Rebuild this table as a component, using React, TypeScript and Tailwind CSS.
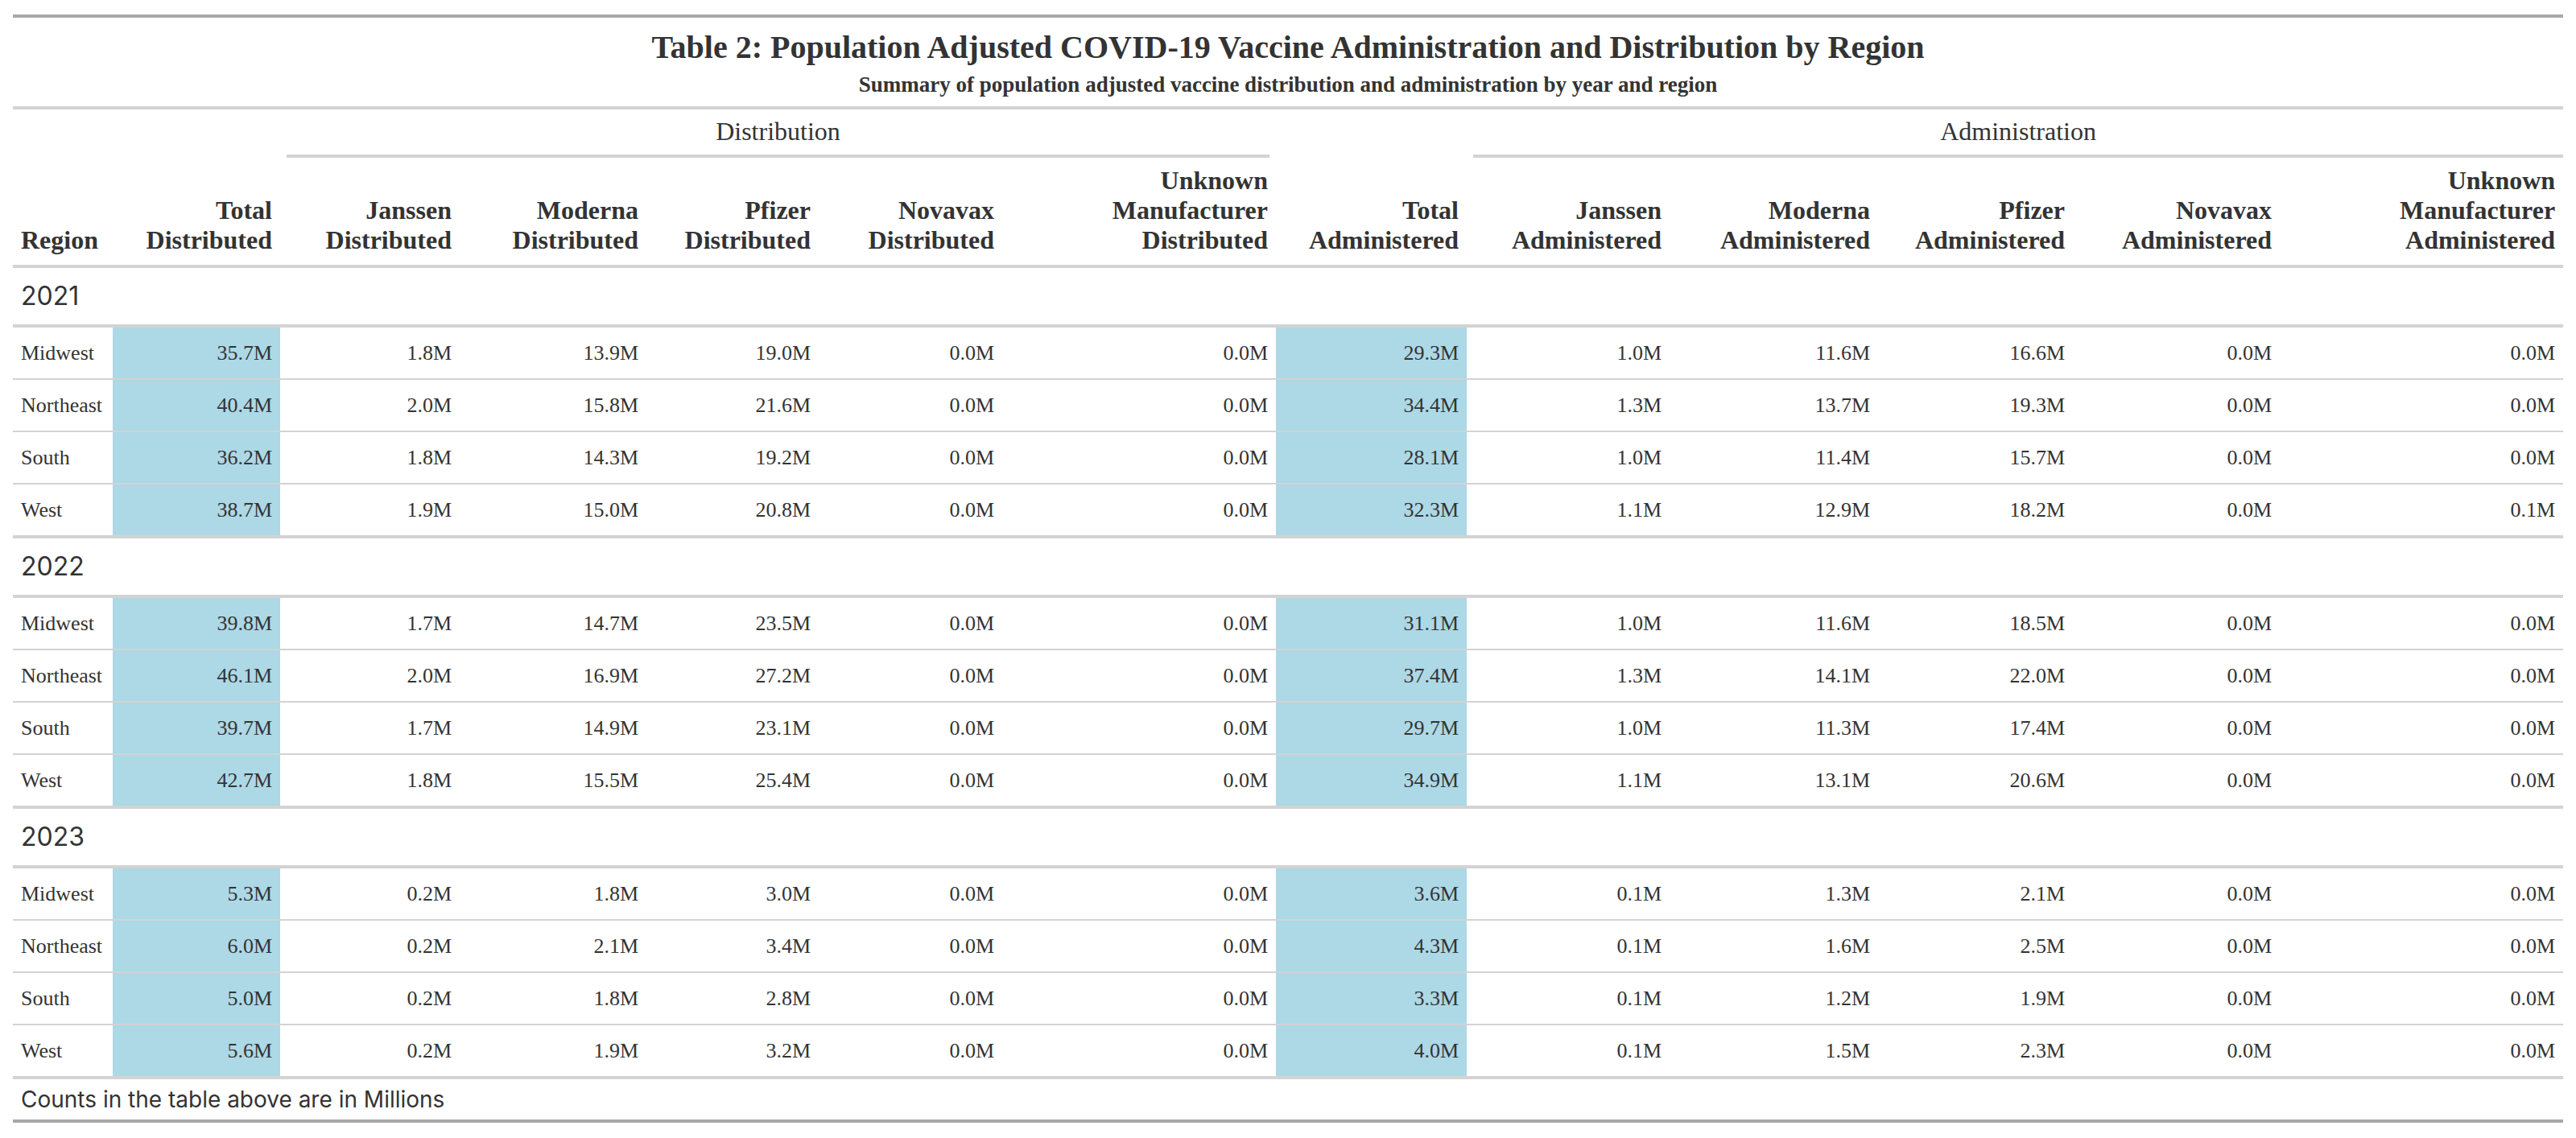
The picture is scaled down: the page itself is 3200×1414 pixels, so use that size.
const serif = "font-['Liberation_Serif','Times_New_Roman',serif]";
const sans = "font-['Inter','Noto_Sans',sans-serif]";

type Row = { region: string; dist: string[]; adm: string[] };
type Group = { year: string; rows: Row[] };

const groups: Group[] = [
  {
    year: "2021",
    rows: [
      { region: "Midwest", dist: ["35.7M", "1.8M", "13.9M", "19.0M", "0.0M", "0.0M"], adm: ["29.3M", "1.0M", "11.6M", "16.6M", "0.0M", "0.0M"] },
      { region: "Northeast", dist: ["40.4M", "2.0M", "15.8M", "21.6M", "0.0M", "0.0M"], adm: ["34.4M", "1.3M", "13.7M", "19.3M", "0.0M", "0.0M"] },
      { region: "South", dist: ["36.2M", "1.8M", "14.3M", "19.2M", "0.0M", "0.0M"], adm: ["28.1M", "1.0M", "11.4M", "15.7M", "0.0M", "0.0M"] },
      { region: "West", dist: ["38.7M", "1.9M", "15.0M", "20.8M", "0.0M", "0.0M"], adm: ["32.3M", "1.1M", "12.9M", "18.2M", "0.0M", "0.1M"] },
    ],
  },
  {
    year: "2022",
    rows: [
      { region: "Midwest", dist: ["39.8M", "1.7M", "14.7M", "23.5M", "0.0M", "0.0M"], adm: ["31.1M", "1.0M", "11.6M", "18.5M", "0.0M", "0.0M"] },
      { region: "Northeast", dist: ["46.1M", "2.0M", "16.9M", "27.2M", "0.0M", "0.0M"], adm: ["37.4M", "1.3M", "14.1M", "22.0M", "0.0M", "0.0M"] },
      { region: "South", dist: ["39.7M", "1.7M", "14.9M", "23.1M", "0.0M", "0.0M"], adm: ["29.7M", "1.0M", "11.3M", "17.4M", "0.0M", "0.0M"] },
      { region: "West", dist: ["42.7M", "1.8M", "15.5M", "25.4M", "0.0M", "0.0M"], adm: ["34.9M", "1.1M", "13.1M", "20.6M", "0.0M", "0.0M"] },
    ],
  },
  {
    year: "2023",
    rows: [
      { region: "Midwest", dist: ["5.3M", "0.2M", "1.8M", "3.0M", "0.0M", "0.0M"], adm: ["3.6M", "0.1M", "1.3M", "2.1M", "0.0M", "0.0M"] },
      { region: "Northeast", dist: ["6.0M", "0.2M", "2.1M", "3.4M", "0.0M", "0.0M"], adm: ["4.3M", "0.1M", "1.6M", "2.5M", "0.0M", "0.0M"] },
      { region: "South", dist: ["5.0M", "0.2M", "1.8M", "2.8M", "0.0M", "0.0M"], adm: ["3.3M", "0.1M", "1.2M", "1.9M", "0.0M", "0.0M"] },
      { region: "West", dist: ["5.6M", "0.2M", "1.9M", "3.2M", "0.0M", "0.0M"], adm: ["4.0M", "0.1M", "1.5M", "2.3M", "0.0M", "0.0M"] },
    ],
  },
];

const widths = [124, 208, 223, 232, 214, 228, 340, 237, 252, 259, 242, 257, 352];

const subCols = ["Janssen", "Moderna", "Pfizer", "Novavax"];

function HeadCell({ lines, rowSpan, left }: { lines: string[]; rowSpan?: number; left?: boolean }) {
  return (
    <th
      rowSpan={rowSpan}
      className={`px-[10px] pt-[10px] pb-[12px] align-bottom font-bold text-[32px] leading-[37px] ${left ? "text-left" : "text-right"}`}
    >
      {lines.map((l) => (
        <div key={l}>{l}</div>
      ))}
    </th>
  );
}

function Cell({ value, hl }: { value: string; hl?: boolean }) {
  return (
    <td className={`px-[10px] py-[16px] text-right align-middle text-[26px] leading-[31px] ${hl ? "bg-[#add8e6]" : ""}`}>
      {value}
    </td>
  );
}

export default function App() {
  return (
    <div className="min-h-screen bg-white px-[16px] pt-[18px] text-[#333333]">
      <table className={`w-[3168px] table-fixed border-collapse ${serif}`}>
        <colgroup>
          {widths.map((w, i) => (
            <col key={i} style={{ width: w }} />
          ))}
        </colgroup>
        <thead>
          <tr className="border-t-4 border-b-4 border-t-[#a8a8a8] border-b-[#d3d3d3]">
            <th colSpan={13} className="h-[114px] pt-[14px] align-top font-bold">
              <div className="text-[40px] leading-[46px]">
                Table 2: Population Adjusted COVID-19 Vaccine Administration and Distribution by Region
              </div>
              <div className="mt-[8px] text-[27px] leading-[31px]">
                Summary of population adjusted vaccine distribution and administration by year and region
              </div>
            </th>
          </tr>
          <tr>
            <HeadCell lines={["Region"]} rowSpan={2} left />
            <HeadCell lines={["Total", "Distributed"]} rowSpan={2} />
            <th colSpan={5} className="px-[8px] pt-[9px] align-bottom font-normal text-[32px] leading-[37px]">
              <div className="border-b-4 border-[#d3d3d3] pb-[10px] text-center">Distribution</div>
            </th>
            <HeadCell lines={["Total", "Administered"]} rowSpan={2} />
            <th colSpan={5} className="pl-[8px] pt-[9px] align-bottom font-normal text-[32px] leading-[37px]">
              <div className="border-b-4 border-[#d3d3d3] pb-[10px] text-center">Administration</div>
            </th>
          </tr>
          <tr className="border-b-4 border-[#d3d3d3]">
            {subCols.map((c) => (
              <HeadCell key={c + "d"} lines={[c, "Distributed"]} />
            ))}
            <HeadCell lines={["Unknown", "Manufacturer", "Distributed"]} />
            {subCols.map((c) => (
              <HeadCell key={c + "a"} lines={[c, "Administered"]} />
            ))}
            <HeadCell lines={["Unknown", "Manufacturer", "Administered"]} />
          </tr>
        </thead>
        {groups.map((g) => (
          <tbody key={g.year}>
            <tr className="border-b-4 border-[#d3d3d3]">
              <td colSpan={13} className={`px-[10px] py-[16px] text-left align-middle text-[32px] leading-[38px] ${sans}`}>
                {g.year}
              </td>
            </tr>
            {g.rows.map((r, i) => (
              <tr
                key={r.region}
                className={i === g.rows.length - 1 ? "border-b-4 border-[#d3d3d3]" : "border-b-2 border-[#d3d3d3]"}
              >
                <td className="px-[10px] py-[16px] text-left align-middle text-[26px] leading-[31px]">{r.region}</td>
                {r.dist.map((v, j) => (
                  <Cell key={"d" + j} value={v} hl={j === 0} />
                ))}
                {r.adm.map((v, j) => (
                  <Cell key={"a" + j} value={v} hl={j === 0} />
                ))}
              </tr>
            ))}
          </tbody>
        ))}
        <tfoot>
          <tr className="border-b-4 border-[#a8a8a8]">
            <td colSpan={13} className={`px-[10px] py-[8px] text-left align-middle text-[28px] leading-[34px] ${sans}`}>
              Counts in the table above are in Millions
            </td>
          </tr>
        </tfoot>
      </table>
    </div>
  );
}
